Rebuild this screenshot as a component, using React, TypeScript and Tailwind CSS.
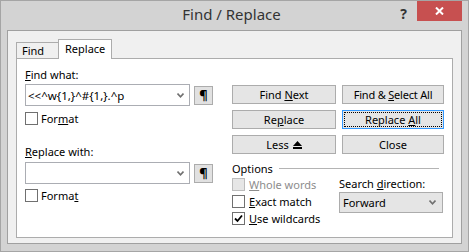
import React from "react";

function Check({ checked = false, disabled = false }: { checked?: boolean; disabled?: boolean }) {
  return (
    <div
      className={
        "w-[13px] h-[13px] border flex items-center justify-center shrink-0 " +
        (disabled ? "border-[#bcbcbc] bg-[#e6e6e6]" : "border-[#707070] bg-white")
      }
    >
      {checked && (
        <svg width="9" height="9" viewBox="0 0 9 9">
          <path d="M1 4.5 L3.5 7 L8 1.5" fill="none" stroke="#000" strokeWidth="1.8" />
        </svg>
      )}
    </div>
  );
}

function Chevron() {
  return (
    <svg width="7" height="5" viewBox="0 0 7 5" className="shrink-0">
      <path d="M0.5 0.5 L3.5 3.8 L6.5 0.5" fill="none" stroke="#707070" strokeWidth="1.6" />
    </svg>
  );
}

function Btn({ children, def = false }: { children: React.ReactNode; def?: boolean }) {
  return (
    <div
      className={
        "h-[19px] flex items-center justify-center bg-[#e5e5e5] border " +
        (def ? "border-[#3399ff] p-px" : "border-[#acacac]")
      }
    >
      {def ? (
        <div className="w-full h-full border border-dotted border-black flex items-center justify-center">
          {children}
        </div>
      ) : (
        children
      )}
    </div>
  );
}

function Combo({ value }: { value: string }) {
  return (
    <div className="flex items-center">
      <div className="w-[166px] h-[22px] border border-[#abadb3] bg-white flex items-center pl-[2px] pr-[5px]">
        <span className="flex-1 whitespace-nowrap text-[11.5px]">{value}</span>
        <Chevron />
      </div>
      <div className="ml-[4px] w-[19px] h-[19px] border border-[#acacac] bg-[#e1e1e1] flex items-center justify-center font-bold text-[13px] leading-none">
        ¶
      </div>
    </div>
  );
}

export default function App() {
  return (
    <div className="w-[469px] h-[252px] bg-[#d3d3d3] border border-[#a5a5a5] flex flex-col font-['Noto_Sans',sans-serif] text-[11px] leading-[15px] text-black">
      {/* title bar */}
      <div className="h-[29px] grid grid-cols-[1fr_auto_1fr] pr-[6px]">
        <div />
        <div className="text-[15px] text-[#333] pt-[4px] leading-[18px]">Find / Replace</div>
        <div className="flex justify-end items-start">
          <div className="mt-[5px] mr-[10px] font-bold text-[14px] leading-[16px] text-[#333]">?</div>
          <div className="w-[45px] h-[20px] bg-[#c75050] flex items-center justify-center">
            <svg width="9" height="8" viewBox="0 0 9 8">
              <path d="M1 0.5 L8 7.5 M8 0.5 L1 7.5" stroke="#fff" strokeWidth="2" />
            </svg>
          </div>
        </div>
      </div>

      {/* client area */}
      <div className="mx-[6px] h-[214px] border border-[#a0a0a0] bg-[#f0f0f0] pt-[8px] px-[8px]">
        {/* tabs */}
        <div className="h-[19px] flex items-end">
          <div className="w-[42px] h-[16px] border-l border-t border-[#acacac] bg-[#f0f0f0] pl-[5px] leading-[15px]">
            Find
          </div>
          <div className="relative z-10 w-[54px] h-[20px] -mb-px border-l border-t border-r border-[#acacac] bg-white pl-[6px] pt-[1px] leading-[15px]">
            Replace
          </div>
        </div>

        {/* panel */}
        <div className="h-[180px] border border-[#acacac] bg-white flex">
          {/* left column */}
          <div className="ml-[8px] w-[188px] pt-[8px] flex flex-col">
            <div className="h-[15px]">
              <u>F</u>ind what:
            </div>
            <div className="mt-[2px]">
              <Combo value="<<^w{1,}^#{1,}.^p" />
            </div>
            <div className="mt-[6px] flex items-center gap-[3px] h-[13px]">
              <Check />
              <span>
                For<u>m</u>at
              </span>
            </div>
            <div className="mt-[19px] h-[15px]">
              <u>R</u>eplace with:
            </div>
            <div className="mt-[3px]">
              <Combo value="" />
            </div>
            <div className="mt-[5px] flex items-center gap-[3px] h-[13px]">
              <Check />
              <span>
                Forma<u>t</u>
              </span>
            </div>
          </div>

          {/* right column */}
          <div className="ml-[19px] w-[211px] pt-[26px] flex flex-col">
            <div className="grid grid-cols-[104px_102px] gap-[6px]">
              <Btn>
                <span>
                  Find <u>N</u>ext
                </span>
              </Btn>
              <Btn>
                <span className="tracking-[-0.2px]">
                  Find &amp; <u>S</u>elect All
                </span>
              </Btn>
              <Btn>
                <span>
                  Re<u>p</u>lace
                </span>
              </Btn>
              <Btn def>
                <span>
                  Replace <u>A</u>ll
                </span>
              </Btn>
              <Btn>
                <span className="flex items-center gap-[4px]">
                  Less
                  <svg width="9" height="8" viewBox="0 0 9 8">
                    <path d="M4.5 0 L9 5 L0 5 Z" fill="#000" />
                    <rect x="0" y="6" width="9" height="2" fill="#000" />
                  </svg>
                </span>
              </Btn>
              <Btn>
                <span>Close</span>
              </Btn>
            </div>

            <div className="mt-[7px] h-[15px] flex items-center pr-[4px]">
              <span>Options</span>
              <div className="ml-[6px] flex-1 h-px bg-[#b4b4b4]" />
            </div>

            <div className="flex">
              <div className="w-[107px] pt-[2px] flex flex-col gap-[4px]">
                <div className="flex items-center gap-[4px] h-[13px]">
                  <Check disabled />
                  <span className="text-[#8d8d8d]">
                    <u>W</u>hole words
                  </span>
                </div>
                <div className="flex items-center gap-[4px] h-[13px]">
                  <Check />
                  <span>
                    <u>E</u>xact match
                  </span>
                </div>
                <div className="flex items-center gap-[4px] h-[13px]">
                  <Check checked />
                  <span>
                    <u>U</u>se wildcards
                  </span>
                </div>
              </div>
              <div className="w-[104px] flex flex-col">
                <div className="h-[15px]">
                  Search <u>d</u>irection:
                </div>
                <div className="mt-[1px] h-[21px] border border-[#acacac] bg-[#e5e5e5] flex items-center pl-[3px] pr-[6px]">
                  <span className="flex-1">Forward</span>
                  <Chevron />
                </div>
              </div>
            </div>
          </div>
        </div>
      </div>
    </div>
  );
}
